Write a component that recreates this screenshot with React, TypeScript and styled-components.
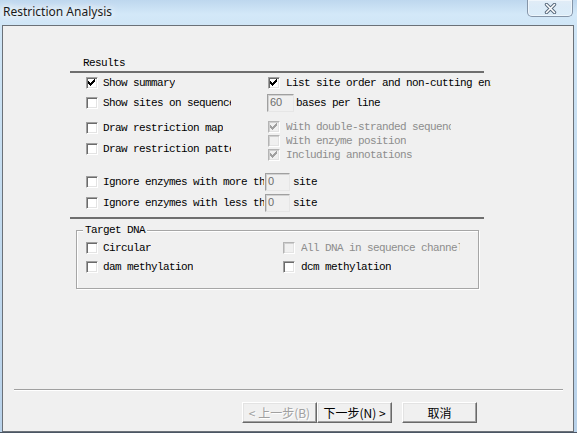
import React from "react";
import styled, { createGlobalStyle } from "styled-components";

const GlobalStyle = createGlobalStyle`
  html, body { margin: 0; padding: 0; }
  body {
    width: 577px;
    height: 433px;
    overflow: hidden;
    font-family: "Liberation Mono", "DejaVu Sans Mono", monospace;
  }
`;

const Window = styled.div`
  width: 577px;
  height: 433px;
  display: flex;
  flex-direction: column;
  background: linear-gradient(180deg, #bed7ee 0px, #d3e8f8 14px, #cfe5f6 30px, #c3dbef 200px, #b9d2ea 433px);
  box-shadow: inset 0 -1px 0 #4b5664;
`;

const TitleBar = styled.div`
  height: 25px;
  flex: none;
  display: flex;
  justify-content: space-between;
  align-items: flex-start;
`;

const Title = styled.span`
  font-family: "Noto Sans", "Open Sans", sans-serif;
  font-size: 12px;
  line-height: 16px;
  padding: 4px 0 0 3px;
  color: #1b1b1b;
  text-shadow: 0 0 6px #ffffff, 0 0 10px #ffffff, 0 0 14px #ffffff;
`;

const CloseButton = styled.div`
  width: 46px;
  height: 17px;
  margin-right: 4px;
  box-sizing: border-box;
  border: 1px solid #8595a8;
  border-top: none;
  border-radius: 0 0 5px 5px;
  background: linear-gradient(180deg, rgba(255, 255, 255, 0.55), rgba(255, 255, 255, 0.15));
  box-shadow: inset 0 0 0 1px rgba(255, 255, 255, 0.5);
  display: flex;
  align-items: center;
  justify-content: center;
`;

const Frame = styled.div`
  flex: 1;
  display: flex;
  padding: 0 3px 1px 2px;
`;

const Panel = styled.div`
  flex: 1;
  display: flex;
  flex-direction: column;
  background: #f0f0f0;
  border: 1px solid #6b7178;
`;

const Page = styled.div`
  margin: 30px 0 0 67px;
  width: 414px;
  display: flex;
  flex-direction: column;
  font-size: 11px;
  letter-spacing: -0.6px;
  color: #000;
`;

const SectionHeader = styled.div`
  height: 15px;
  line-height: 15px;
  padding-left: 13px;
  border-bottom: 2px solid #6e6e6e;
`;

const Row = styled.div<{ $h: number; $mt: number; $top?: boolean }>`
  display: flex;
  align-items: ${(p) => (p.$top ? "flex-start" : "center")};
  height: ${(p) => p.$h}px;
  margin-top: ${(p) => p.$mt}px;
  padding-left: 16px;
`;

const Cell = styled.div<{ $w?: number }>`
  display: flex;
  align-items: center;
  flex: none;
  ${(p) => (p.$w ? `width: ${p.$w}px;` : "")}
`;

const Stack = styled.div<{ $w?: number; $gap: number; $item: number }>`
  display: flex;
  flex-direction: column;
  gap: ${(p) => p.$gap}px;
  flex: none;
  ${(p) => (p.$w ? `width: ${p.$w}px;` : "")}
  & > * {
    height: ${(p) => p.$item}px;
  }
`;

const Item = styled.div`
  display: flex;
  align-items: center;
`;

const Box = styled.span<{ $disabled?: boolean }>`
  display: block;
  flex: none;
  width: 12px;
  height: 12px;
  box-sizing: border-box;
  background: ${(p) => (p.$disabled ? "#f0f0f0" : "#ffffff")};
  border: 1px solid;
  border-color: ${(p) =>
    p.$disabled ? "#b4b4b4 #ffffff #ffffff #b4b4b4" : "#a0a0a0 #ffffff #ffffff #a0a0a0"};
  box-shadow: inset 1px 1px 0 ${(p) => (p.$disabled ? "#cfcfcf" : "#6b6b6b")},
    inset -1px -1px 0 #e3e3e3;
  & > svg {
    display: block;
  }
`;

const Label = styled.span<{ $w?: number; $disabled?: boolean; $gap?: number }>`
  display: block;
  white-space: nowrap;
  overflow: hidden;
  line-height: 14px;
  margin-left: ${(p) => (p.$gap ?? 5)}px;
  color: ${(p) => (p.$disabled ? "#8d8d8d" : "#000000")};
  ${(p) => (p.$w ? `width: ${p.$w}px;` : "")}
`;

const Plain = styled.span<{ $ml: number }>`
  white-space: nowrap;
  line-height: 14px;
  margin-left: ${(p) => p.$ml}px;
`;

const Field = styled.div<{ $w: number; $ml: number }>`
  width: ${(p) => p.$w}px;
  height: 18px;
  margin-left: ${(p) => p.$ml}px;
  box-sizing: border-box;
  flex: none;
  background: #f0f0f0;
  border: 1px solid;
  border-color: #a0a0a0 #e6e6e6 #e6e6e6 #a0a0a0;
  box-shadow: inset 1px 1px 0 #d2d2d2;
  font-family: "Liberation Sans", Arial, sans-serif;
  font-size: 11px;
  letter-spacing: 0;
  line-height: 15px;
  padding-left: 2px;
  color: #6d6d6d;
`;

const Divider = styled.div`
  border-top: 2px solid #6e6e6e;
  margin-top: 4px;
`;

const GroupBox = styled.div`
  position: relative;
  margin: 11px 0 0 6px;
  width: 403px;
  box-sizing: border-box;
  border: 1px solid #a6a6a6;
  box-shadow: inset 1px 1px 0 #ffffff, 1px 1px 0 #ffffff;
  padding: 9px 0 13px 9px;
  display: flex;
  flex-direction: column;
  gap: 3px;
`;

const Legend = styled.span`
  position: absolute;
  top: -8px;
  left: 6px;
  padding: 0 2px;
  line-height: 15px;
  background: #f0f0f0;
`;

const GroupRow = styled.div`
  display: flex;
  align-items: center;
  height: 16px;
`;

const Footer = styled.div`
  margin-top: auto;
  display: flex;
  flex-direction: column;
`;

const Separator = styled.div`
  margin: 0 10px 0 11px;
  border-top: 1px solid #a0a0a0;
  border-bottom: 1px solid #ffffff;
`;

const ButtonRow = styled.div`
  display: flex;
  padding: 11px 0 8px 239px;
`;

const Button = styled.div<{ $disabled?: boolean; $ml?: number }>`
  width: 75px;
  height: 21px;
  box-sizing: border-box;
  margin-left: ${(p) => p.$ml ?? 0}px;
  background: #f0f0f0;
  border: 1px solid;
  border-color: #ffffff #696969 #696969 #ffffff;
  box-shadow: inset -1px -1px 0 #a0a0a0, inset 1px 1px 0 #e3e3e3;
  display: flex;
  align-items: center;
  justify-content: center;
  font-family: "Noto Sans CJK SC", "Noto Sans", sans-serif;
  font-size: 12px;
  white-space: pre;
  color: ${(p) => (p.$disabled ? "#a0a0a0" : "#000000")};
  text-shadow: ${(p) => (p.$disabled ? "1px 1px 0 #ffffff" : "none")};
`;

const CHECK_COLS: [number, number][] = [
  [1, 3],
  [2, 4],
  [3, 5],
  [4, 4],
  [5, 3],
  [6, 2],
  [7, 1],
];

const CheckMark = ({ color }: { color: string }) => (
  <svg width="10" height="10" viewBox="0 0 10 10" shapeRendering="crispEdges">
    {CHECK_COLS.map(([x, y]) => (
      <rect key={x} x={x} y={y} width="1" height="3" fill={color} />
    ))}
  </svg>
);

const Check = ({ checked, disabled }: { checked?: boolean; disabled?: boolean }) => (
  <Box $disabled={disabled}>
    {checked ? <CheckMark color={disabled ? "#a0a0a0" : "#000000"} /> : null}
  </Box>
);

const CloseGlyph = () => (
  <svg width="13" height="11" viewBox="0 0 13 11">
    <path d="M2.5 1.5 L10.5 9.5 M10.5 1.5 L2.5 9.5" stroke="#56677a" strokeWidth="3.4" strokeLinecap="round" fill="none" />
    <path d="M2.5 1.5 L10.5 9.5 M10.5 1.5 L2.5 9.5" stroke="#ffffff" strokeWidth="1.6" strokeLinecap="round" fill="none" />
  </svg>
);

export default function App() {
  return (
    <>
      <GlobalStyle />
      <Window>
        <TitleBar>
          <Title>Restriction Analysis</Title>
          <CloseButton>
            <CloseGlyph />
          </CloseButton>
        </TitleBar>
        <Frame>
          <Panel>
            <Page>
              <SectionHeader>Results</SectionHeader>

              <Row $h={16} $mt={2}>
                <Cell $w={182}>
                  <Check checked />
                  <Label>Show summary</Label>
                </Cell>
                <Cell>
                  <Check checked />
                  <Label $gap={6} $w={205}>List site order and non-cutting enzymes</Label>
                </Cell>
              </Row>

              <Row $h={20} $mt={2}>
                <Cell $w={182}>
                  <Check />
                  <Label $w={128}>Show sites on sequence</Label>
                </Cell>
                <Cell>
                  <Field $w={27} $ml={-1}>60</Field>
                  <Plain $ml={2}>bases per line</Plain>
                </Cell>
              </Row>

              <Row $h={43} $mt={7} $top>
                <Stack $w={182} $gap={5} $item={16}>
                  <Item>
                    <Check />
                    <Label>Draw restriction map</Label>
                  </Item>
                  <Item>
                    <Check />
                    <Label $w={128}>Draw restriction pattern</Label>
                  </Item>
                </Stack>
                <Stack $gap={0} $item={14}>
                  <Item>
                    <Check checked disabled />
                    <Label $gap={6} $w={165} $disabled>With double-stranded sequence</Label>
                  </Item>
                  <Item>
                    <Check disabled />
                    <Label $gap={6} $disabled>With enzyme position</Label>
                  </Item>
                  <Item>
                    <Check checked disabled />
                    <Label $gap={6} $disabled>Including annotations</Label>
                  </Item>
                </Stack>
              </Row>

              <Row $h={20} $mt={9}>
                <Check />
                <Label $w={161}>Ignore enzymes with more than</Label>
                <Field $w={25} $ml={1}>0</Field>
                <Plain $ml={3}>site</Plain>
              </Row>

              <Row $h={20} $mt={1}>
                <Check />
                <Label $w={161}>Ignore enzymes with less than</Label>
                <Field $w={25} $ml={1}>0</Field>
                <Plain $ml={3}>site</Plain>
              </Row>

              <Divider />

              <GroupBox>
                <Legend>Target DNA</Legend>
                <GroupRow>
                  <Cell $w={197}>
                    <Check />
                    <Label>Circular</Label>
                  </Cell>
                  <Cell>
                    <Check disabled />
                    <Label $gap={6} $w={159} $disabled>All DNA in sequence channel</Label>
                  </Cell>
                </GroupRow>
                <GroupRow>
                  <Cell $w={197}>
                    <Check />
                    <Label>dam methylation</Label>
                  </Cell>
                  <Cell>
                    <Check />
                    <Label $gap={6}>dcm methylation</Label>
                  </Cell>
                </GroupRow>
              </GroupBox>
            </Page>

            <Footer>
              <Separator />
              <ButtonRow>
                <Button $disabled>{"< 上一步(B)"}</Button>
                <Button>{"下一步(N) >"}</Button>
                <Button $ml={10}>取消</Button>
              </ButtonRow>
            </Footer>
          </Panel>
        </Frame>
      </Window>
    </>
  );
}
